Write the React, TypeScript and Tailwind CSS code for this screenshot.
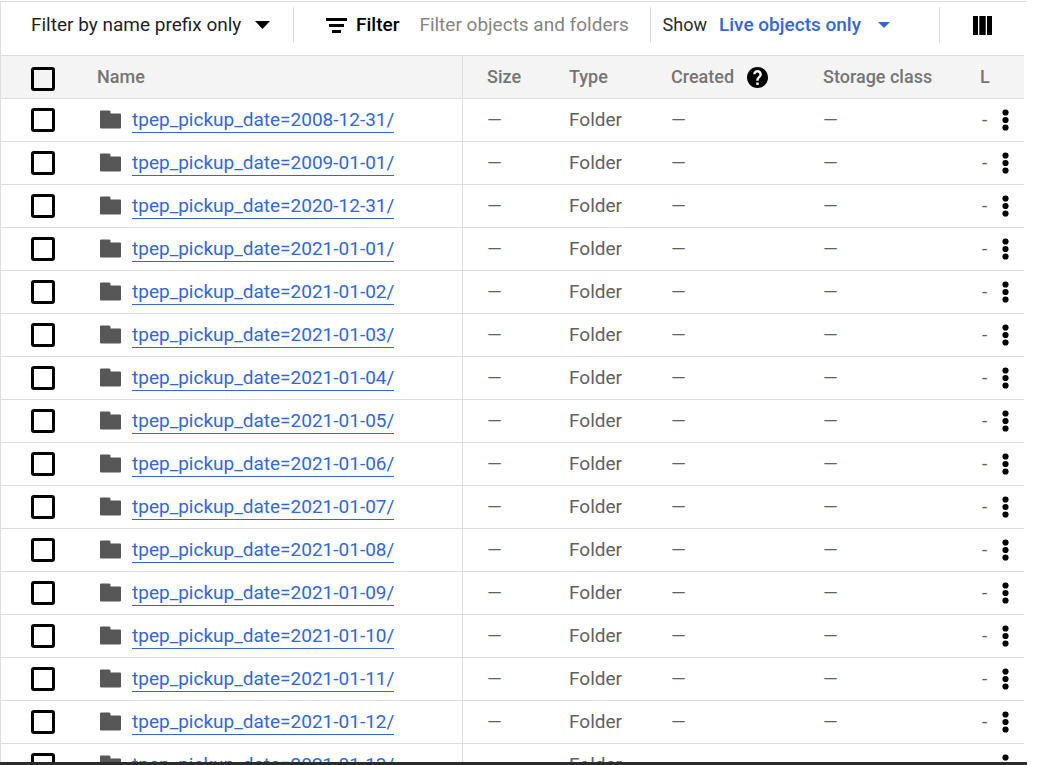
import React from "react";

const dates: string[] = [
  "2008-12-31",
  "2009-01-01",
  "2020-12-31",
  "2021-01-01",
  "2021-01-02",
  "2021-01-03",
  "2021-01-04",
  "2021-01-05",
  "2021-01-06",
  "2021-01-07",
  "2021-01-08",
  "2021-01-09",
  "2021-01-10",
  "2021-01-11",
  "2021-01-12",
  "2021-01-13",
];

function Checkbox({ label }: { label: string }) {
  return (
    <input
      type="checkbox"
      aria-label={label}
      className="block size-6 appearance-none rounded-[3px] border-3 border-black checked:bg-black"
    />
  );
}

function Folder() {
  return (
    <svg className="mb-[2px] h-[19px] w-[21px] shrink-0" viewBox="0 0 21 19" fill="#575757" aria-hidden="true">
      <path d="M1 .5H9.500L10.500 1.500V3.500H20A1 1 0 0 1 21 4.500V17.500A1 1 0 0 1 20 18.500H1A1 1 0 0 1 0 17.500V1.500A1 1 0 0 1 1 .5Z" />
    </svg>
  );
}

function HelpIcon() {
  return (
    <svg className="block size-[21px]" viewBox="2 2 20 20" aria-hidden="true">
      <path d="M12 2C6.480 2 2 6.480 2 12s4.480 10 10 10 10-4.480 10-10S17.520 2 12 2zm1.200 17.200h-2.400v-2.400h2.400v2.400zm2.070-7.950-.9.920C13.650 12.900 13.200 13.500 13.200 15h-2.400v-.5c0-1.100.55-2.100 1.270-2.830l1.240-1.260c.37-.36.49-.86.49-1.410 0-1-.8-1.800-1.800-1.800s-1.800.8-1.800 1.800H7.800c0-2.320 1.880-4.200 4.200-4.200s4.200 1.880 4.200 4.200c0 .88-.36 1.680-.93 2.250z" />
    </svg>
  );
}

function Toolbar() {
  return (
    <div className="flex h-[54px] shrink-0 items-center border-t border-l border-[#dedede] pb-[7px] text-[19px] leading-6">
      <label className="relative ml-[30px] flex h-9 w-[239px] shrink-0 items-center">
        <select
          aria-label="Filter mode"
          className="w-full appearance-none bg-transparent text-[#1f1f1f] outline-none"
        >
          <option>Filter by name prefix only</option>
        </select>
        <svg className="pointer-events-none absolute right-0 h-2 w-[15px]" viewBox="0 0 15 8" aria-hidden="true">
          <path d="M0 0H15L7.500 8Z" />
        </svg>
      </label>
      <div className="ml-[23px] h-9 w-px shrink-0 bg-[#dedede]" />
      <label htmlFor="filter" className="ml-8 flex shrink-0 items-center gap-[9px] font-medium text-black">
        <svg className="h-[15px] w-[21px]" viewBox="0 0 21 15" aria-hidden="true">
          <path d="M0 0H21V3H0ZM3 6H18V9H3ZM6 12H15V15H6Z" />
        </svg>
        Filter
      </label>
      <input
        id="filter"
        type="text"
        placeholder="Filter objects and folders"
        className="ml-5 min-w-0 flex-1 bg-transparent outline-none placeholder:text-[#858585]"
      />
      <div className="h-9 w-px shrink-0 bg-[#dedede]" />
      <label htmlFor="show" className="ml-3 shrink-0 text-[18px] text-[#2b2b2b]">
        Show
      </label>
      <div className="relative ml-3 flex w-[171px] shrink-0 items-center">
        <select
          id="show"
          className="w-full appearance-none bg-transparent font-medium text-[#3367d6] outline-none"
        >
          <option>Live objects only</option>
        </select>
        <svg className="pointer-events-none absolute right-0 h-[6px] w-3" viewBox="0 0 12 6" fill="#3367d6" aria-hidden="true">
          <path d="M0 0H12L6 6Z" />
        </svg>
      </div>
      <div className="ml-[49px] h-9 w-px shrink-0 bg-[#dedede]" />
      <button type="button" aria-label="Columns" className="mr-[35px] ml-[33px] shrink-0">
        <svg className="block h-[19px] w-[19px]" viewBox="0 0 19 19" aria-hidden="true">
          <path d="M0 0H5V19H0ZM6.300 0H12.700V19H6.300ZM14 0H19V19H14Z" />
        </svg>
      </button>
    </div>
  );
}

function ObjectTable() {
  return (
    <div className="mr-[3px] min-h-0 flex-1 overflow-hidden border-l border-[#dedede]">
      <table className="w-full table-fixed border-separate border-spacing-0 text-left text-[19px] leading-6 whitespace-nowrap text-[#616161] [&_td]:border-b [&_td]:border-[#dedede] [&_td]:p-0 [&_th]:border-y [&_th]:border-[#dedede] [&_th]:bg-[#f4f4f4] [&_th]:p-0 [&_th]:font-medium">
        <colgroup>
          <col className="w-24" />
          <col />
          <col className="w-[82px]" />
          <col className="w-[102px]" />
          <col className="w-[152px]" />
          <col className="w-[157px]" />
          <col className="w-[33px]" />
          <col className="w-[35px]" />
        </colgroup>
        <thead>
          <tr className="h-11 text-[18px] text-[#757575]">
            <th scope="col">
              <div className="pt-1 pl-[30px]">
                <Checkbox label="Select all" />
              </div>
            </th>
            <th scope="col" className="border-r">Name</th>
            <th scope="col"><div className="pl-6">Size</div></th>
            <th scope="col"><div className="pl-6">Type</div></th>
            <th scope="col">
              <div className="flex items-center gap-[13px] pl-6">
                Created
                <button type="button" aria-label="About creation time">
                  <HelpIcon />
                </button>
              </div>
            </th>
            <th scope="col"><div className="pl-6">Storage class</div></th>
            <th scope="col"><div className="pl-6">L</div></th>
            <th />
          </tr>
        </thead>
        <tbody>
          {dates.map((date) => (
            <tr key={date} className="h-[43px]">
              <td>
                <div className="pl-[30px]">
                  <Checkbox label={`Select ${date}`} />
                </div>
              </td>
              <td className="border-r">
                <div className="flex items-center gap-[11px] pl-[3px]">
                  <Folder />
                  <a href="#" className="border-b border-[#3367d6] text-[#3367d6]">
                    tpep_pickup_date={date}/
                  </a>
                </div>
              </td>
              <td><div className="pl-6">—</div></td>
              <td><div className="pl-6">Folder</div></td>
              <td><div className="pl-6">—</div></td>
              <td><div className="pl-6">—</div></td>
              <td><div className="pl-[26px]">-</div></td>
              <td>
                <button type="button" aria-label={`Actions for ${date}`} className="mb-px ml-3 block">
                  <svg className="block h-[22px] w-[9px]" viewBox="0 0 9 22" aria-hidden="true">
                    <circle cx="4.500" cy="3.500" r="3.100" />
                    <circle cx="4.500" cy="11" r="3.100" />
                    <circle cx="4.500" cy="18.500" r="3.100" />
                  </svg>
                </button>
              </td>
            </tr>
          ))}
        </tbody>
      </table>
    </div>
  );
}

export default function App() {
  return (
    <main className="h-screen overflow-hidden bg-white pr-[18px] font-[Roboto,sans-serif]">
      <div className="flex h-full flex-col border-b-3 border-[#2b2b2d] pt-px">
        <Toolbar />
        <ObjectTable />
      </div>
    </main>
  );
}
